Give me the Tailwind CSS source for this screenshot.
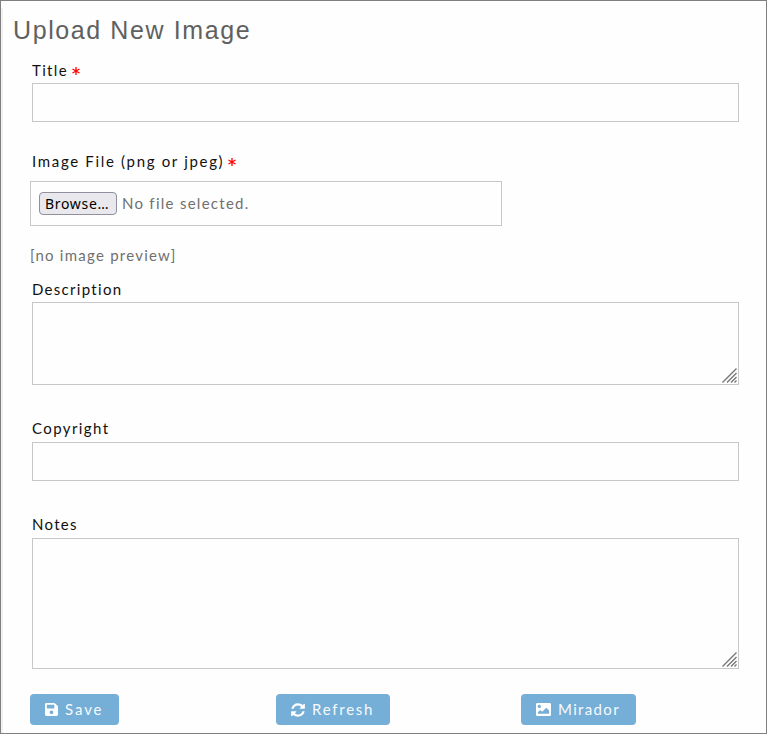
<!DOCTYPE html>
<html lang="en">
<head>
<meta charset="utf-8">
<title>Upload New Image</title>
<script src="https://cdn.jsdelivr.net/npm/@tailwindcss/browser@4"></script>
</head>
<body class="bg-[#fefefe]">
<main class="relative flex h-[734px] w-[767px] flex-col overflow-hidden border border-[#808080] bg-[#fefefe] font-['Lato',sans-serif] text-[15px] leading-5 text-[#111]">
  <div class="absolute bottom-0 left-0 top-[7px] w-[2px] bg-[#f1f1f1]"></div>
  <h1 class="ml-3 mt-[13px] h-8 whitespace-nowrap font-['Liberation_Sans',Arial,sans-serif] text-[25px] leading-8 tracking-[1.6px] text-[#606060]">Upload New Image</h1>
  <form class="ml-[31px] flex w-[707px] flex-col">
    <label class="mt-[14px] flex h-5 gap-[4px]"><span class="tracking-[1.35px]">Title</span><svg class="mt-[7px] h-2 w-2" viewBox="0 0 8 8" stroke="#f00" stroke-width="1.3"><path d="M4 0v8M.5 2l7 4M7.500 2l-7 4"/></svg></label>
    <div class="mt-[3px] h-[39px] border border-[#c8c8c8]"></div>
    <label class="mt-[29px] flex h-5 gap-[4px]"><span class="tracking-[1.67px]">Image File (png or jpeg)</span><svg class="mt-[7px] h-2 w-2" viewBox="0 0 8 8" stroke="#f00" stroke-width="1.3"><path d="M4 0v8M.5 2l7 4M7.500 2l-7 4"/></svg></label>
    <div class="-ml-[2px] mt-[10px] flex h-[45px] w-[472px] items-center gap-[5px] border border-[#c8c8c8] pl-2 text-[#707070]">
      <span class="flex h-[23px] w-[78px] items-center rounded-[4px] border border-[#8f8f9d] bg-[#e9e9ed] pl-[5px] font-['Noto_Sans',sans-serif] text-[14px] tracking-[0.68px] text-black">Browse…</span>
      <span class="pb-[2px] tracking-[1.27px]">No file selected.</span>
    </div>
    <p class="-ml-[2px] mt-[19px] h-5 tracking-[1.24px] text-[#707070]">[no image preview]</p>
    <label class="mt-[14px] h-5 tracking-[1.3px]">Description</label>
    <div class="mt-[3px] flex h-[83px] items-end justify-end border border-[#c8c8c8] pb-px pr-px">
      <svg class="h-[15px] w-[15px]" viewBox="0 0 15 15" stroke="#777" stroke-width="1.4"><path d="M.5 14.500l14-14M5 14.500l9.500-9.500M9 14.500l5.500-5.500M12.500 14.500l2-2"/></svg>
    </div>
    <label class="mt-[33px] h-5 tracking-[1.4px]">Copyright</label>
    <div class="mt-[4px] h-[39px] border border-[#c8c8c8]"></div>
    <label class="mt-[33px] h-5 tracking-[1.3px]">Notes</label>
    <div class="mt-[4px] flex h-[131px] items-end justify-end border border-[#c8c8c8] pb-px pr-px">
      <svg class="h-[15px] w-[15px]" viewBox="0 0 15 15" stroke="#777" stroke-width="1.4"><path d="M.5 14.500l14-14M5 14.500l9.500-9.500M9 14.500l5.500-5.500M12.500 14.500l2-2"/></svg>
    </div>
    <div class="-ml-[2px] mt-[25px] grid grid-cols-[246px_245px_115px] text-[#f5faff]">
      <button type="button" class="flex h-[31px] w-[89px] items-center rounded-[4px] bg-[#75aed6] pl-[15px]">
        <svg class="h-[15px] w-[13px]" viewBox="0 0 448 512" fill="white"><path d="M433.941 129.941l-83.882-83.882A48 48 0 0 0 316.118 32H48C21.490 32 0 53.490 0 80v352c0 26.510 21.490 48 48 48h352c26.510 0 48-21.490 48-48V163.882a48 48 0 0 0-14.059-33.941zM224 416c-35.346 0-64-28.654-64-64 0-35.346 28.654-64 64-64s64 28.654 64 64c0 35.346-28.654 64-64 64zm96-304.520V212c0 6.627-5.373 12-12 12H76c-6.627 0-12-5.373-12-12V108c0-6.627 5.373-12 12-12h228.520c3.183 0 6.235 1.264 8.485 3.515l3.480 3.480A11.996 11.996 0 0 1 320 111.480z"/></svg>
        <span class="ml-[7px] pb-[2px] tracking-[1.9px]">Save</span>
      </button>
      <button type="button" class="flex h-[31px] w-[114px] items-center rounded-[4px] bg-[#75aed6] pl-[15px]">
        <svg class="h-[16px] w-[14px]" viewBox="0 0 1536 1792" fill="white"><path d="M1511 1056q0 5-1 7-64 268-268 434.500t-478 166.500q-146 0-282.500-55t-243.500-157l-129 129q-19 19-45 19t-45-19-19-45v-448q0-26 19-45t45-19h448q26 0 45 19t19 45-19 45l-137 137q71 66 161 102t187 36q134 0 250-65t186-179q11-17 53-117 8-23 30-23h192q13 0 22.500 9.500t9.500 22.500zm25-800v448q0 26-19 45t-45 19h-448q-26 0-45-19t-19-45 19-45l138-138q-148-137-349-137-134 0-250 65t-186 179q-11 17-53 117-8 23-30 23h-199q-13 0-22.500-9.500t-9.500-22.500v-7q65-268 270-434.500t480-166.500q146 0 284 55.500t245 156.500l130-129q19-19 45-19t45 19 19 45z"/></svg>
        <span class="ml-[7px] pb-[2px] tracking-[1.75px]">Refresh</span>
      </button>
      <button type="button" class="flex h-[31px] w-[115px] items-center rounded-[4px] bg-[#75aed6] pl-[15px]">
        <svg class="h-[15px] w-[15px]" viewBox="0 0 512 512" fill="white"><path d="M464 480H48c-26.500 0-48-21.500-48-48V80c0-26.500 21.500-48 48-48h416c26.500 0 48 21.500 48 48v352c0 26.500-21.500 48-48 48zM112 96a56 56 0 1 0 0 112a56 56 0 1 0 0-112zM64 400h384V288L352 192 208 336l-64-64-80 80z" fill-rule="evenodd"/></svg>
        <span class="ml-[7px] pb-[2px] tracking-[1.35px]">Mirador</span>
      </button>
    </div>
  </form>
</main>
</body>
</html>
